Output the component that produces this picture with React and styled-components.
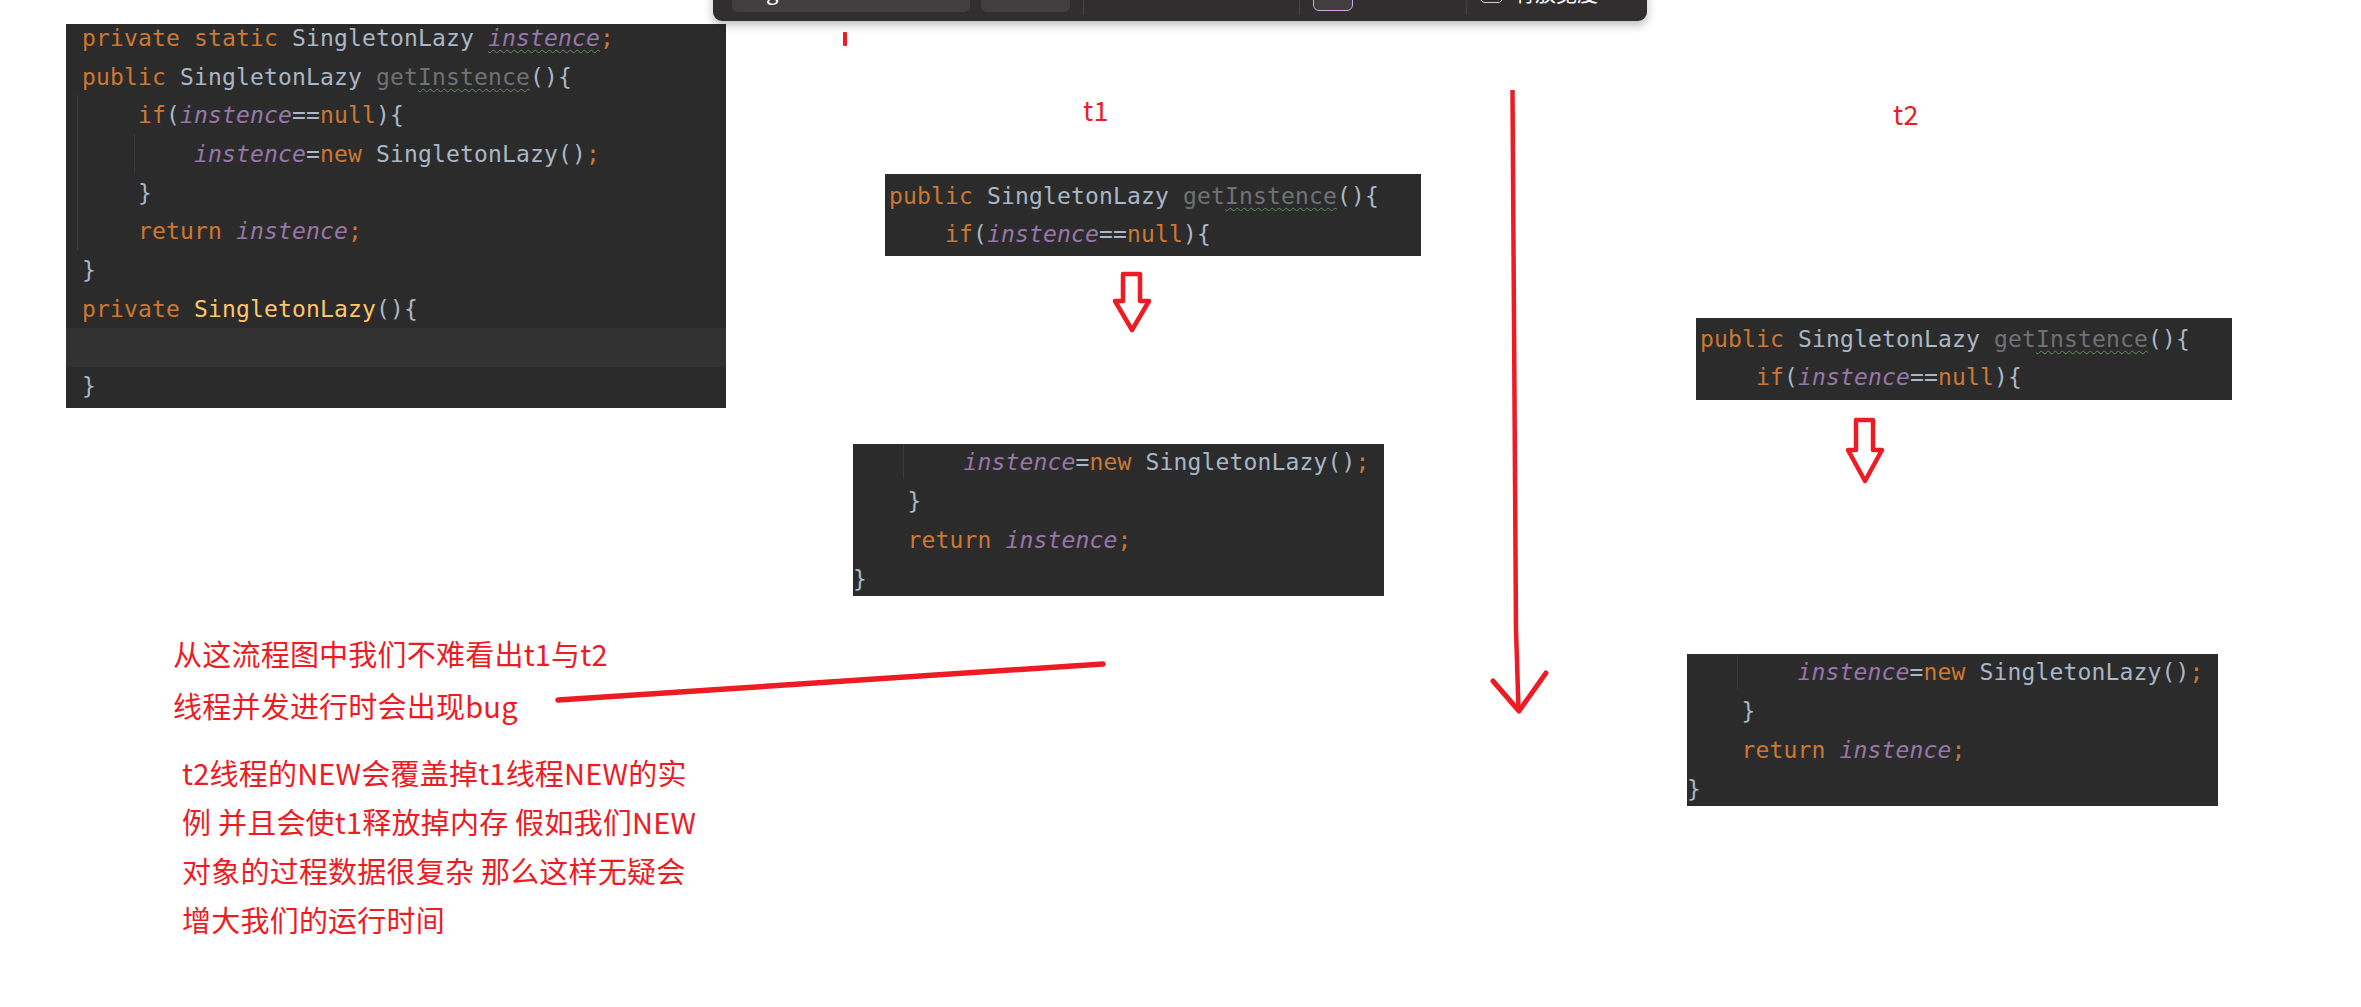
import React from "react";
import styled, { createGlobalStyle } from "styled-components";

const RED = "#ed1c24";

const GlobalStyle = createGlobalStyle`
    html, body {
        margin: 0;
        padding: 0;
        background: #fff;
        overflow: hidden;
    }
`;

// the whole page is a pasted whiteboard, so things sit at free canvas positions
const Canvas = styled.div`
    position: relative;
    width: 2361px;
    height: 1007px;
    overflow: hidden;
    background: #fff;
`;

const Toolbar = styled.div`
    position: absolute;
    left: 713px;
    top: -40px;
    width: 934px;
    height: 61px;
    box-sizing: border-box;
    padding: 0 19px 9px;
    display: flex;
    align-items: flex-end;
    background: #302e2f;
    border-radius: 0 0 9px 9px;
    box-shadow: 0 4px 10px rgba(0, 0, 0, 0.28);
    color: #fff;
    font-family: "Noto Sans CJK SC", "Noto Sans", sans-serif;
`;

const ToolField = styled.div`
    width: ${props => props.$width}px;
    margin-left: ${props => props.$gap || 0}px;
    height: 40px;
    box-sizing: border-box;
    padding-left: 34px;
    background: #403e3f;
    border-radius: 0 0 6px 6px;
    font-size: 22px;
    line-height: 36px;
    overflow: hidden;
`;

const ToolDivider = styled.div`
    width: 1px;
    height: 40px;
    margin-left: ${props => props.$gap}px;
    margin-bottom: -3px;
    background: #454344;
`;

const ColorSwatch = styled.div`
    width: 40px;
    height: 40px;
    margin-left: 13px;
    margin-bottom: 1px;
    box-sizing: border-box;
    background: #403e3f;
    border: 1px solid #d7a3e3;
    border-radius: 0 0 6px 6px;
`;

const ToolCheck = styled.div`
    width: 23px;
    height: 30px;
    margin-left: 13px;
    margin-bottom: 9px;
    box-sizing: border-box;
    border: 1px solid #d0cfcf;
    border-radius: 0 0 5px 5px;
`;

const ToolLabel = styled.div`
    margin-left: 11px;
    margin-bottom: 5px;
    font-size: 21px;
    line-height: 30px;
    white-space: nowrap;
`;

const CodePanel = styled.div`
    position: absolute;
    left: ${props => props.$left}px;
    top: ${props => props.$top}px;
    width: ${props => props.$width}px;
    height: ${props => props.$height}px;
    overflow: hidden;
    background: #2b2b2b;
    font-family: "DejaVu Sans Mono", "Liberation Mono", monospace;
    font-size: 23px;
    letter-spacing: 0.15px;
    color: #a9b7c6;
`;

const CodeBody = styled.div`
    margin-top: ${props => props.$shift}px;
`;

const Line = styled.div`
    height: ${props => props.$rowHeight || 38.67}px;
    line-height: ${props => props.$rowHeight || 38.67}px;
    padding-left: ${props => props.$pad + props.$indent * 56}px;
    white-space: pre;
    background: ${props => (props.$active ? "#323232" : "transparent")};
`;

const Guide = styled.div`
    position: absolute;
    left: ${props => props.$left}px;
    top: ${props => props.$top}px;
    width: 1px;
    height: ${props => props.$height}px;
    background: #393b3c;
`;

const Keyword = styled.span`
    color: #cc7832;
`;

const Field = styled.span`
    color: #9876aa;
    font-style: italic;
`;

const Unused = styled.span`
    color: #6f7275;
`;

const Ctor = styled.span`
    color: #ffc66d;
`;

const Squiggle = styled.span`
    text-decoration: underline wavy #5f8a58 1px;
    text-underline-offset: 3px;
`;

const Note = styled.div`
    position: absolute;
    left: ${props => props.$left}px;
    top: ${props => props.$top}px;
    color: ${RED};
    font-family: "Noto Sans CJK SC", "Noto Sans", sans-serif;
    font-size: ${props => props.$size || 29}px;
    line-height: ${props => props.$rowHeight || 49}px;
    letter-spacing: 0.22px;
    white-space: pre;
`;

const Strokes = styled.svg`
    position: absolute;
    left: 0;
    top: 0;
`;

const GetInstanceLine = ({ pad, rowHeight }) => (
    <Line $pad={pad} $indent={0} $rowHeight={rowHeight}>
        <Keyword>public</Keyword> SingletonLazy <Unused>get<Squiggle>Instence</Squiggle></Unused>(){"{"}
    </Line>
);

const IfLine = ({ pad, rowHeight }) => (
    <Line $pad={pad} $indent={1} $rowHeight={rowHeight}>
        <Keyword>if</Keyword>(<Field>instence</Field>==<Keyword>null</Keyword>){"{"}
    </Line>
);

const NewLine = ({ pad, rowHeight }) => (
    <Line $pad={pad} $indent={2} $rowHeight={rowHeight}>
        <Field>instence</Field>=<Keyword>new</Keyword> SingletonLazy()<Keyword>;</Keyword>
    </Line>
);

const CloseLine = ({ pad, indent, rowHeight }) => (
    <Line $pad={pad} $indent={indent} $rowHeight={rowHeight}>
        {"}"}
    </Line>
);

const ReturnLine = ({ pad, rowHeight }) => (
    <Line $pad={pad} $indent={1} $rowHeight={rowHeight}>
        <Keyword>return</Keyword> <Field>instence</Field><Keyword>;</Keyword>
    </Line>
);

const DownArrow = ({ x, y, neck, tip }) => (
    <polygon
        points={`${x},${y} ${x + 17},${y} ${x + 17},${y + neck} ${x + 26},${y + neck} ${x + 9},${y + tip} ${x - 8},${y + neck} ${x},${y + neck}`}
        fill="none"
        stroke={RED}
        strokeWidth="4.5"
        strokeLinejoin="round"
    />
);

const App = () => (
    <Canvas>
        <GlobalStyle />

        <CodePanel $left={66} $top={24} $width={660} $height={384}>
            <CodeBody $shift={-5}>
                <Line $pad={16} $indent={0}>
                    <Keyword>private static</Keyword> SingletonLazy <Squiggle><Field>instence</Field></Squiggle><Keyword>;</Keyword>
                </Line>
                <GetInstanceLine pad={16} />
                <IfLine pad={16} />
                <NewLine pad={16} />
                <CloseLine pad={16} indent={1} />
                <ReturnLine pad={16} />
                <CloseLine pad={16} indent={0} />
                <Line $pad={16} $indent={0}>
                    <Keyword>private</Keyword> <Ctor>SingletonLazy</Ctor>(){"{"}
                </Line>
                <Line $pad={16} $indent={0} $active />
                <CloseLine pad={16} indent={0} />
            </CodeBody>
            <Guide $left={11} $top={71} $height={155} />
            <Guide $left={68} $top={110} $height={38} />
        </CodePanel>

        <CodePanel $left={885} $top={174} $width={536} $height={82}>
            <CodeBody $shift={2.5}>
                <GetInstanceLine pad={4} rowHeight={38.4} />
                <IfLine pad={4} rowHeight={38.4} />
            </CodeBody>
        </CodePanel>

        <CodePanel $left={853} $top={444} $width={531} $height={152}>
            <CodeBody $shift={-1}>
                <NewLine pad={-1.5} rowHeight={39} />
                <CloseLine pad={-1.5} indent={1} rowHeight={39} />
                <ReturnLine pad={-1.5} rowHeight={39} />
                <CloseLine pad={-1.5} indent={0} rowHeight={39} />
            </CodeBody>
            <Guide $left={50} $top={0} $height={35} />
        </CodePanel>

        <CodePanel $left={1696} $top={318} $width={536} $height={82}>
            <CodeBody $shift={2}>
                <GetInstanceLine pad={4} rowHeight={38.4} />
                <IfLine pad={4} rowHeight={38.4} />
            </CodeBody>
        </CodePanel>

        <CodePanel $left={1687} $top={654} $width={531} $height={152}>
            <CodeBody $shift={-1.5}>
                <NewLine pad={-1.5} rowHeight={39} />
                <CloseLine pad={-1.5} indent={1} rowHeight={39} />
                <ReturnLine pad={-1.5} rowHeight={39} />
                <CloseLine pad={-1.5} indent={0} rowHeight={39} />
            </CodeBody>
            <Guide $left={50} $top={0} $height={35} />
        </CodePanel>

        <Note $left={1083} $top={86} $size={27} $rowHeight={48}>t1</Note>
        <Note $left={1893} $top={90} $size={27} $rowHeight={48}>t2</Note>

        <Note $left={173} $top={627} $rowHeight={52}>
            {"从这流程图中我们不难看出t1与t2\n线程并发进行时会出现bug"}
        </Note>
        <Note $left={182} $top={748}>
            {"t2线程的NEW会覆盖掉t1线程NEW的实\n例 并且会使t1释放掉内存 假如我们NEW\n对象的过程数据很复杂 那么这样无疑会\n增大我们的运行时间"}
        </Note>

        <Strokes width="2361" height="1007" viewBox="0 0 2361 1007">
            <rect x="843" y="32" width="4" height="14" rx="1" fill={RED} />
            <DownArrow x={1123} y={274} neck={27} tip={56} />
            <DownArrow x={1856} y={420} neck={30} tip={61} />
            <path d="M558 700 L1103 664" stroke={RED} strokeWidth="5.5" strokeLinecap="round" fill="none" />
            <path d="M1512.5 90 L1513 168 L1514 321 L1515 476 L1516 630 L1518.5 709" stroke={RED} strokeWidth="4.5" fill="none" />
            <path d="M1493 681 L1519 711 L1546 673" stroke={RED} strokeWidth="5" strokeLinecap="round" strokeLinejoin="round" fill="none" />
        </Strokes>

        <Toolbar>
            <ToolField $width={238}>g</ToolField>
            <ToolField $width={89} $gap={11} />
            <ToolDivider $gap={13} />
            <ToolDivider $gap={215} />
            <ColorSwatch />
            <ToolDivider $gap={113} />
            <ToolCheck />
            <ToolLabel>有放宽度</ToolLabel>
        </Toolbar>
    </Canvas>
);

export default App;
